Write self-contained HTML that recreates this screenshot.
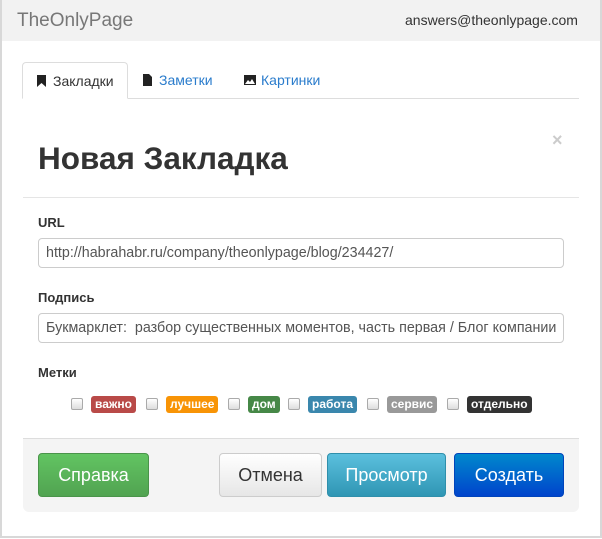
<!DOCTYPE html><html><head><meta charset="utf-8"><style>
*{box-sizing:border-box}body{margin:0;width:602px;height:539px;background:#fff;font-family:"Liberation Sans",Arial,sans-serif;position:relative;overflow:hidden}
.frame{position:absolute;left:0;top:0;width:602px;height:538px;border:2px solid #d8d8d8;border-top:0}
.hdr{position:absolute;left:2px;top:0;width:598px;height:41px;background:#f2f2f2}
.a{position:absolute}
.tab{position:absolute;top:62px;height:37px;font-size:14px;line-height:36px;color:#2a7ccc}
.lbl{position:absolute;left:38px;font-size:13px;font-weight:bold;color:#333}
.inp{position:absolute;left:38px;width:526px;height:30px;border:1px solid #ccc;border-radius:4px;font-size:14.3px;color:#555;padding:0 7px;line-height:28px;white-space:nowrap;overflow:hidden}
.cb{position:absolute;top:398px;width:12px;height:12px;border:1px solid #aaa;border-radius:2px;background:linear-gradient(#fff,#ddd)}
.lb{position:absolute;top:396px;height:17px;font-size:12px;font-weight:bold;color:#fff;line-height:17px;padding:0 4px;border-radius:3px}
.btn{position:absolute;top:453px;height:44px;border-radius:4px;font-size:18px;line-height:42px;text-align:center;color:#fff}
</style></head><body>
<div class="frame"></div>
<div class="hdr"></div>
<div class="a" style="left:17px;top:10px;font-size:19px;color:#777">TheOnlyPage</div>
<div class="a" style="left:405px;top:12px;font-size:14px;color:#333">answers@theonlypage.com</div>
<div class="a" style="left:127px;top:98px;width:452px;height:1px;background:#ddd"></div>
<div class="tab" style="left:22px;width:106px;border:1px solid #ddd;border-bottom:1px solid #fff;border-radius:4px 4px 0 0;color:#333;padding-left:14px;background:#fff"><svg width="9" height="12" style="vertical-align:-1px;margin-right:7px"><path d="M0 0H9V12L4.5 8L0 12Z" fill="#222"/></svg>Закладки</div>
<div class="tab" style="left:143px"><svg width="9" height="12" style="vertical-align:-1px;margin-right:7px"><path d="M0 0H6L9 3V12H0Z" fill="#222"/></svg>Заметки</div>
<div class="tab" style="left:244px"><svg width="12" height="10" style="vertical-align:0;margin-right:5px"><rect width="12" height="10" fill="#222"/><path d="M1 9L4 5L6 7L8 4L11 9Z" fill="#fff"/></svg>Картинки</div>
<div class="a" style="left:38px;top:140px;font-size:31.5px;font-weight:bold;color:#333">Новая Закладка</div>
<div class="a" style="left:552px;top:130px;font-size:18px;font-weight:bold;color:#ccc">×</div>
<div class="a" style="left:23px;top:197px;width:556px;height:1px;background:#e5e5e5"></div>
<div class="lbl" style="top:215px">URL</div>
<div class="inp" style="top:238px">http://habrahabr.ru/company/theonlypage/blog/234427/</div>
<div class="lbl" style="top:290px">Подпись</div>
<div class="inp" style="top:313px">Букмарклет:&nbsp; разбор существенных моментов, часть первая / Блог компании</div>
<div class="lbl" style="top:365px">Метки</div>
<div class="cb" style="left:71px"></div><div class="lb" style="left:91px;background:#b94a48">важно</div>
<div class="cb" style="left:146px"></div><div class="lb" style="left:166px;background:#f89406">лучшее</div>
<div class="cb" style="left:228px"></div><div class="lb" style="left:248px;background:#468847">дом</div>
<div class="cb" style="left:288px"></div><div class="lb" style="left:308px;background:#3a87ad">работа</div>
<div class="cb" style="left:367px"></div><div class="lb" style="left:387px;background:#999">сервис</div>
<div class="cb" style="left:447px"></div><div class="lb" style="left:467px;background:#333">отдельно</div>
<div class="a" style="left:23px;top:438px;width:556px;height:74px;background:#f4f4f4;border-top:1px solid #ddd;border-radius:0 0 6px 6px"></div>
<div class="btn" style="left:38px;width:111px;background:linear-gradient(#62c462,#51a351);border:1px solid #4a944a">Справка</div>
<div class="btn" style="left:219px;width:103px;background:linear-gradient(#fff,#e6e6e6);border:1px solid #ccc;color:#333">Отмена</div>
<div class="btn" style="left:327px;width:119px;background:linear-gradient(#5bc0de,#2f96b4);border:1px solid #2f8fab">Просмотр</div>
<div class="btn" style="left:454px;width:110px;background:linear-gradient(#0088cc,#0044cc);border:1px solid #0044bb">Создать</div>
</body></html>
